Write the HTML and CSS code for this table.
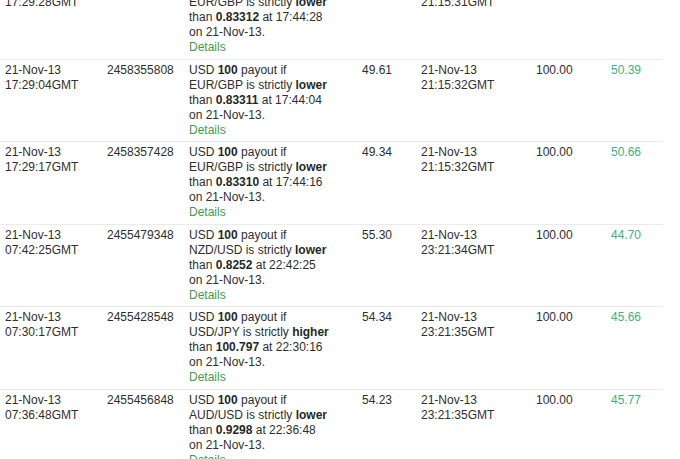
FILE: index.html
```html
<!DOCTYPE html>
<html>
<head>
<meta charset="utf-8">
<link rel="stylesheet" href="styles.css">
</head>
<body>
<div class="viewport">
  <div class="table">
    <div class="row">
      <div class="c1">21-Nov-13<br>17:29:28GMT</div>
      <div class="c2">2458355608</div>
      <div class="c3">USD <b>100</b> payout if<br>EUR/GBP is strictly <b>lower</b><br>than <b>0.83312</b> at 17:44:28<br>on 21-Nov-13.<br><a class="details">Details</a></div>
      <div class="c4">49.61</div>
      <div class="c5">21-Nov-13<br>21:15:31GMT</div>
      <div class="c6">100.00</div>
      <div class="c7">50.39</div>
    </div>
    <div class="row">
      <div class="c1">21-Nov-13<br>17:29:04GMT</div>
      <div class="c2">2458355808</div>
      <div class="c3">USD <b>100</b> payout if<br>EUR/GBP is strictly <b>lower</b><br>than <b>0.83311</b> at 17:44:04<br>on 21-Nov-13.<br><a class="details">Details</a></div>
      <div class="c4">49.61</div>
      <div class="c5">21-Nov-13<br>21:15:32GMT</div>
      <div class="c6">100.00</div>
      <div class="c7">50.39</div>
    </div>
    <div class="row">
      <div class="c1">21-Nov-13<br>17:29:17GMT</div>
      <div class="c2">2458357428</div>
      <div class="c3">USD <b>100</b> payout if<br>EUR/GBP is strictly <b>lower</b><br>than <b>0.83310</b> at 17:44:16<br>on 21-Nov-13.<br><a class="details">Details</a></div>
      <div class="c4">49.34</div>
      <div class="c5">21-Nov-13<br>21:15:32GMT</div>
      <div class="c6">100.00</div>
      <div class="c7">50.66</div>
    </div>
    <div class="row">
      <div class="c1">21-Nov-13<br>07:42:25GMT</div>
      <div class="c2">2455479348</div>
      <div class="c3">USD <b>100</b> payout if<br>NZD/USD is strictly <b>lower</b><br>than <b>0.8252</b> at 22:42:25<br>on 21-Nov-13.<br><a class="details">Details</a></div>
      <div class="c4">55.30</div>
      <div class="c5">21-Nov-13<br>23:21:34GMT</div>
      <div class="c6">100.00</div>
      <div class="c7">44.70</div>
    </div>
    <div class="row">
      <div class="c1">21-Nov-13<br>07:30:17GMT</div>
      <div class="c2">2455428548</div>
      <div class="c3">USD <b>100</b> payout if<br>USD/JPY is strictly <b>higher</b><br>than <b>100.797</b> at 22:30:16<br>on 21-Nov-13.<br><a class="details">Details</a></div>
      <div class="c4">54.34</div>
      <div class="c5">21-Nov-13<br>23:21:35GMT</div>
      <div class="c6">100.00</div>
      <div class="c7">45.66</div>
    </div>
    <div class="row">
      <div class="c1">21-Nov-13<br>07:36:48GMT</div>
      <div class="c2">2455456848</div>
      <div class="c3">USD <b>100</b> payout if<br>AUD/USD is strictly <b>lower</b><br>than <b>0.9298</b> at 22:36:48<br>on 21-Nov-13.<br><a class="details">Details</a></div>
      <div class="c4">54.23</div>
      <div class="c5">21-Nov-13<br>23:21:35GMT</div>
      <div class="c6">100.00</div>
      <div class="c7">45.77</div>
    </div>
  </div>
</div>
</body>
</html>
```

FILE: styles.css
```css
html, body {
  margin: 0;
  padding: 0;
  background: #ffffff;
}
.viewport {
  width: 680px;
  height: 459px;
  overflow: hidden;
}
.table {
  width: 663px;
  margin-top: -24px;
  font-family: "Liberation Sans", Arial, sans-serif;
  font-size: 12px;
  line-height: 15px;
  color: #2e2e2e;
}
.row {
  display: grid;
  grid-template-columns: 102px 82px 173px 59px 115px 75px 57px;
  padding: 3px 0 3.5px 5px;
  border-top: 1px solid #ebebeb;
}
.row b {
  font-weight: bold;
  color: #1f2a1f;
}
.details {
  color: #429c4e;
  text-decoration: none;
}
.c7 {
  color: #40b080;
}
```
